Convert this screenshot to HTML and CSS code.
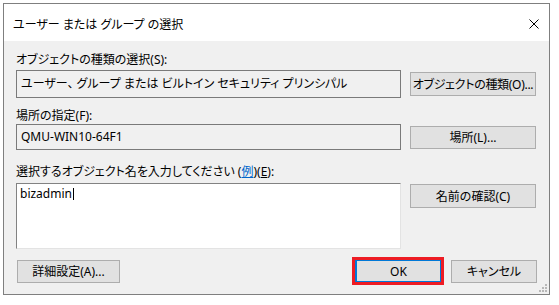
FILE: index.html
```html
<!DOCTYPE html>
<html lang="ja">
<head>
    <meta charset="UTF-8">
    <title>ユーザー または グループ の選択</title>
    <link rel="stylesheet" href="styles.css">
</head>
<body>

<div class="dialog">
    <div class="title-bar">
        <span class="title">ユーザー または グループ の選択</span>
        <svg class="close" width="10" height="10" viewBox="0 0 10 10">
            <path d="M0.5 0.5 L9.5 9.5 M9.5 0.5 L0.5 9.5" stroke="#000" stroke-width="1" fill="none"/>
        </svg>
    </div>

    <div class="dialog-body">
        <div class="form-grid">
            <div class="label row-label1">オブジェクトの種類の選択(S):</div>
            <div class="field readonly">ユーザー<span class="comma">、</span>グループ または ビルトイン セキュリティ プリンシパル</div>
            <button class="btn btn-side btn-tight">オブジェクトの種類(O)...</button>

            <div class="label row-label2">場所の指定(F):</div>
            <div class="field readonly field-short">QMU-WIN10-64F1</div>
            <button class="btn btn-side btn-short">場所(L)...</button>

            <div class="label row-label3">選択するオブジェクト名を入力してください (<a class="link" href="#">例</a>)(<u>E</u>):</div>
            <div class="field names">bizadmin<span class="caret"></span></div>
            <button class="btn btn-side btn-top">名前の確認(C)</button>
        </div>

        <div class="footer">
            <button class="btn btn-advanced">詳細設定(A)...</button>
            <div class="footer-right">
                <div class="highlight">
                    <button class="btn btn-ok">OK</button>
                </div>
                <button class="btn btn-cancel">キャンセル</button>
            </div>
        </div>
    </div>

    <svg class="grip" width="8" height="8" viewBox="0 0 8 8">
        <rect x="6" y="0" width="2" height="2" fill="#b8b8b8"/>
        <rect x="3" y="3" width="2" height="2" fill="#b8b8b8"/>
        <rect x="6" y="3" width="2" height="2" fill="#b8b8b8"/>
        <rect x="0" y="6" width="2" height="2" fill="#b8b8b8"/>
        <rect x="3" y="6" width="2" height="2" fill="#b8b8b8"/>
        <rect x="6" y="6" width="2" height="2" fill="#b8b8b8"/>
    </svg>
</div>

</body>
</html>
```

FILE: styles.css
```css
body {
    margin: 0;
    background-color: #fff;
    font-family: "Noto Sans", "Noto Sans CJK JP", sans-serif;
    font-size: 12px;
    font-feature-settings: "palt";
    color: #000;
}
.dialog {
    position: relative;
    box-sizing: border-box;
    width: 547px;
    height: 292px;
    margin: 3px 0 0 3px;
    border: 1px solid #7f7f7f;
    background-color: #f0f0f0;
}
.title-bar {
    display: flex;
    align-items: center;
    justify-content: space-between;
    height: 37px;
    padding: 3px 10px 0 9px;
    box-sizing: border-box;
    background-color: #fff;
}
.title {
    font-size: 12px;
}
.dialog-body {
    padding: 11px 12px 0 12px;
}
.form-grid {
    display: grid;
    grid-template-columns: 385px 126px;
    column-gap: 9px;
}
.label {
    grid-column: 1 / 3;
    height: 16px;
    line-height: 16px;
}
.row-label1 {
    margin-bottom: 2px;
}
.row-label2 {
    margin-top: 10px;
    margin-bottom: 0;
}
.row-label3 {
    margin-top: 14px;
    margin-bottom: 3px;
}
.link {
    color: #0066cc;
}
.comma {
    margin-right: 3px;
}
.field {
    box-sizing: border-box;
    height: 28px;
    padding: 0 4px;
    line-height: 26px;
    white-space: nowrap;
    border: 1px solid #7a7a7a;
}
.readonly {
    background-color: #f0f0f0;
}
.field-short {
    height: 26px;
    line-height: 24px;
}
.names {
    height: 66px;
    padding: 2px 3px;
    line-height: 16px;
    background-color: #fff;
    border-color: #828282 #e3e3e3 #e3e3e3 #828282;
}
.caret {
    display: inline-block;
    width: 1px;
    height: 12px;
    margin-left: 1px;
    vertical-align: -2px;
    background-color: #000;
}
.btn {
    box-sizing: border-box;
    height: 24px;
    padding: 0;
    white-space: nowrap;
    font-family: inherit;
    font-size: 12px;
    font-feature-settings: "palt";
    color: #000;
    background-color: #e1e1e1;
    border: 1px solid #adadad;
}
.btn-side {
    align-self: center;
    width: 126px;
}
.btn-tight {
    letter-spacing: -0.3px;
}
.btn-short {
    height: 23px;
}
.btn-top {
    align-self: start;
    margin-top: 1px;
}
.footer {
    display: flex;
    justify-content: space-between;
    align-items: center;
    margin-top: 8px;
    padding-left: 1px;
}
.btn-advanced {
    width: 103px;
    height: 23px;
}
.footer-right {
    display: flex;
    align-items: center;
    gap: 7px;
}
.highlight {
    border: 3px solid #ed1c24;
}
.btn-ok {
    display: block;
    width: 86px;
    height: 22px;
    border: 1px solid #0078d7;
    border-left-width: 2px;
}
.btn-cancel {
    width: 86px;
    height: 23px;
}
.close {
    display: block;
}
.grip {
    position: absolute;
    right: 2px;
    bottom: 2px;
}
```
